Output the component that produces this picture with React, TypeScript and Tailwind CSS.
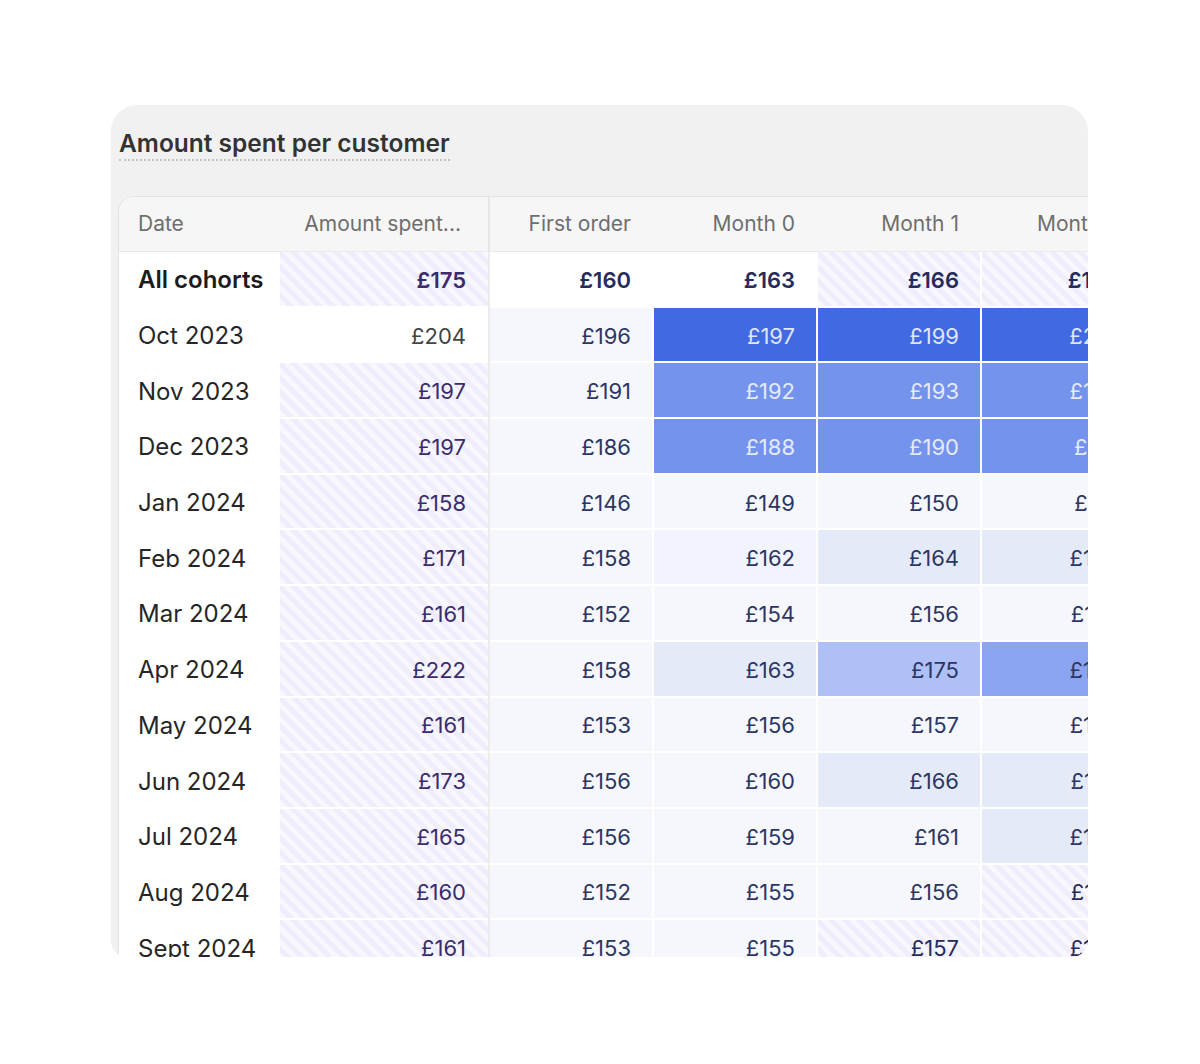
import React from "react";

type K = "w" | "s" | "f" | "f2" | "l" | "m" | "m2" | "d" | "d2";

const BG: Record<K, string> = {
  w: "bg-white",
  s: "bg-[repeating-linear-gradient(45deg,#f8f7fe_0px,#f8f7fe_5px,#efedfb_5px,#efedfb_10px)]",
  f: "bg-[#f6f7fd]",
  f2: "bg-[#f1f4fc]",
  l: "bg-[#e5eaf9]",
  m: "bg-[#aec0f5]",
  m2: "bg-[#8ba4ef]",
  d: "bg-[#4169e1]",
  d2: "bg-[#7493ec]",
};

const TXT: Record<K, string> = {
  w: "text-[#262b5a]",
  s: "text-[#262b5a]",
  f: "text-[#2d3663]",
  f2: "text-[#2d3663]",
  l: "text-[#2d3663]",
  m: "text-[#2d3663]",
  m2: "text-[#2d3663]",
  d: "text-[#dfe6fb]",
  d2: "text-[#e4eafc]",
};

type Row = {
  date: string;
  amt: string;
  amtStriped: boolean;
  vals: string[];
  k: K[];
  bold?: boolean;
};

const rows: Row[] = [
  { date: "All cohorts", amt: "£175", amtStriped: true, vals: ["£160", "£163", "£166", "£168"], k: ["w", "w", "s", "s"], bold: true },
  { date: "Oct 2023", amt: "£204", amtStriped: false, vals: ["£196", "£197", "£199", "£201"], k: ["f", "d", "d", "d"] },
  { date: "Nov 2023", amt: "£197", amtStriped: true, vals: ["£191", "£192", "£193", "£195"], k: ["f", "d2", "d2", "d2"] },
  { date: "Dec 2023", amt: "£197", amtStriped: true, vals: ["£186", "£188", "£190", "£191"], k: ["f", "d2", "d2", "d2"] },
  { date: "Jan 2024", amt: "£158", amtStriped: true, vals: ["£146", "£149", "£150", "£151"], k: ["f", "f", "f", "f"] },
  { date: "Feb 2024", amt: "£171", amtStriped: true, vals: ["£158", "£162", "£164", "£165"], k: ["f", "f2", "l", "l"] },
  { date: "Mar 2024", amt: "£161", amtStriped: true, vals: ["£152", "£154", "£156", "£157"], k: ["f", "f", "f", "f"] },
  { date: "Apr 2024", amt: "£222", amtStriped: true, vals: ["£158", "£163", "£175", "£183"], k: ["f", "l", "m", "m2"] },
  { date: "May 2024", amt: "£161", amtStriped: true, vals: ["£153", "£156", "£157", "£158"], k: ["f", "f", "f", "f"] },
  { date: "Jun 2024", amt: "£173", amtStriped: true, vals: ["£156", "£160", "£166", "£167"], k: ["f", "f", "l", "l"] },
  { date: "Jul 2024", amt: "£165", amtStriped: true, vals: ["£156", "£159", "£161", "£162"], k: ["f", "f", "f", "l"] },
  { date: "Aug 2024", amt: "£160", amtStriped: true, vals: ["£152", "£155", "£156", "£157"], k: ["f", "f", "f", "s"] },
  { date: "Sept 2024", amt: "£161", amtStriped: true, vals: ["£153", "£155", "£157", "£158"], k: ["f", "f", "s", "s"] },
];

const headers = ["First order", "Month 0", "Month 1", "Month 2"];

export default function App() {
  return (
    <div
      className="min-h-[1064px] w-full bg-white pt-[105px]"
      style={{ fontFamily: "Inter, 'Noto Sans', sans-serif" }}
    >
      <div className="ml-[111px] h-[852px] w-[977px] overflow-hidden rounded-t-[26px] rounded-b-[16px] bg-[#f1f1f1]">
        <div className="flex h-[91px] items-start pl-[8px] pt-[23px]">
          <div className="border-b-2 border-dotted border-[#c2c2c2] pb-[1px] text-[24.5px] font-semibold leading-[30px] text-[#333333]">
            Amount spent per customer
          </div>
        </div>
        <div className="ml-[7px] w-[1100px] overflow-hidden rounded-tl-[16px] border-l border-t border-[#e2e2e2] bg-white">
          {/* header */}
          <div className="flex h-[55px] border-b border-[#e9e9e9] bg-[#f6f6f6] text-[21px] text-[#6e6e6e]">
            <div className="flex w-[161px] items-center pl-[19px]">Date</div>
            <div className="flex w-[208px] items-center justify-end pr-[27px]">Amount spent...</div>
            <div className="w-[2px] bg-[#e6e6e6]" />
            {headers.map((h, i) => (
              <div
                key={h}
                className={`flex w-[164px] shrink-0 items-center justify-end ${i === 3 ? "pr-[27px]" : "pr-[23px]"}`}
              >
                {h}
              </div>
            ))}
          </div>
          {/* body */}
          {rows.map((r) => (
            <div key={r.date} className="flex h-[55.7px] text-[22px]">
              <div
                className={`flex w-[161px] items-center border-b-2 border-white pl-[19px] pt-[3px] text-[24px] ${
                  r.bold ? "font-semibold text-[#1c1c1c]" : "text-[#262626]"
                }`}
              >
                {r.date}
              </div>
              <div
                className={`flex w-[208px] items-center justify-end border-b-2 border-white pr-[22px] pt-[3px] ${
                  r.amtStriped ? `${BG.s} text-[#3a2c6c]` : "bg-white text-[#444444]"
                } ${r.bold ? "font-semibold" : ""}`}
              >
                {r.amt}
              </div>
              <div className="w-[2px] bg-[#ececec]" />
              {r.vals.map((v, i) => (
                <div
                  key={i}
                  className={`flex w-[164px] shrink-0 items-center justify-end border-b-2 border-r-2 border-white pt-[3px] ${
                    i === 3 ? "pr-[25px]" : "pr-[21px]"
                  } ${BG[r.k[i]]} ${TXT[r.k[i]]} ${r.bold ? "font-semibold" : ""}`}
                >
                  {v}
                </div>
              ))}
            </div>
          ))}
        </div>
      </div>
    </div>
  );
}
